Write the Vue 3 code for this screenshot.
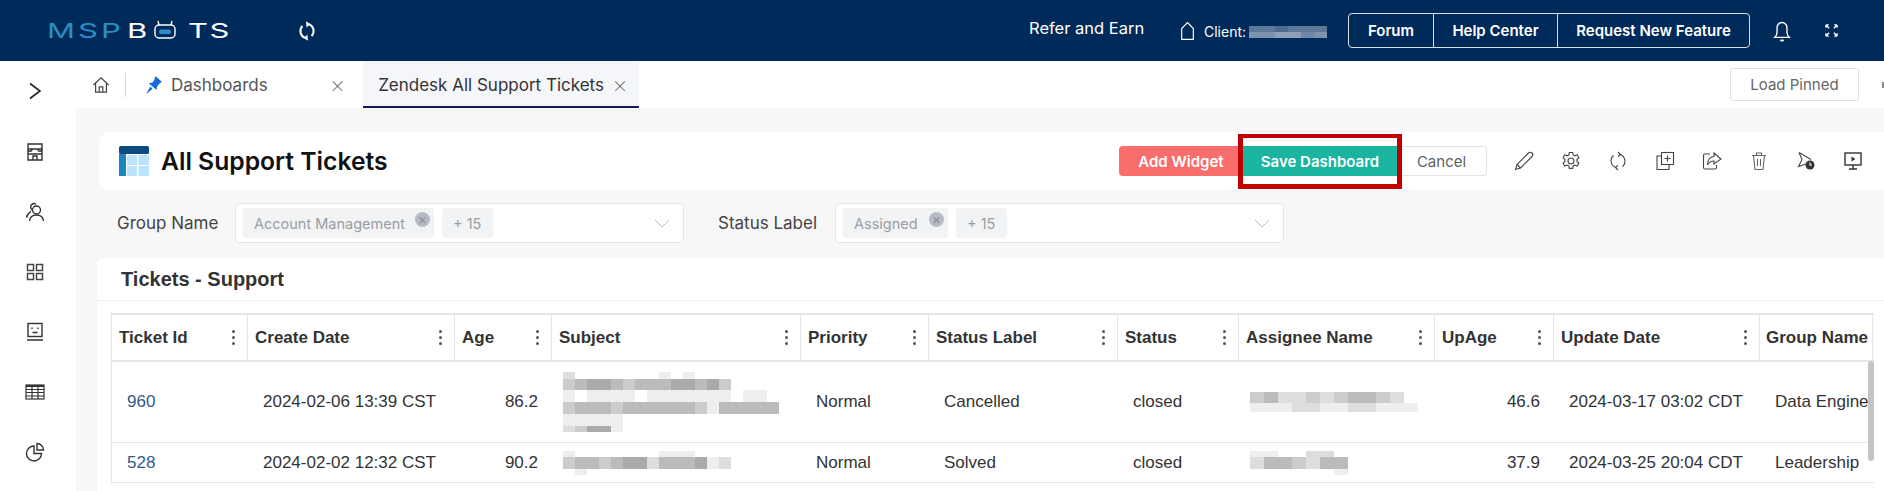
<template>
  <div class="app-page">
    <header class="top-bar">
      <div class="logo">
        <span class="logo-msp">MSP</span>
        <span class="logo-b">B</span>
        <svg class="logo-bot" viewBox="0 0 22 19" fill="none" stroke="#fff" stroke-width="1.4">
          <path d="M5 5L4 1M17 5l1-4" />
          <rect x="1" y="5" width="20" height="13" rx="4" />
          <rect x="5" y="9.500" width="12" height="4.500" rx="2" fill="#2a8fc4" stroke="none" />
        </svg>
        <span class="logo-ts">TS</span>
      </div>
      <svg class="sync-icon" viewBox="0 0 24 24" fill="none" stroke="#fff" stroke-width="2.2">
        <path d="M14 4.500a8 8 0 0 1 3 13" />
        <path d="M10 19.500a8 8 0 0 1-3-13" />
        <path d="M11 2l4 2.500-3.500 3M13 22l-4-2.500 3.500-3" fill="#fff" stroke-width="1" />
      </svg>
      <span class="refer">Refer and Earn</span>
      <svg class="client-home" viewBox="0 0 18 24" fill="none" stroke="#fff" stroke-width="1.4">
        <path d="M2 22V9l7-7 7 7v13z" />
      </svg>
      <span class="client-label">Client:</span>
      <div class="mosaic client-mosaic">
        <div v-for="(row, i) in clientBlur" :key="i" class="mosaic-row">
          <i v-for="(c, j) in row" :key="j" :style="{ width: '13px', height: '6px', background: c }"></i>
        </div>
      </div>
      <div class="link-group">
        <a class="forum">Forum</a>
        <a class="help">Help Center</a>
        <a class="request">Request New Feature</a>
      </div>
      <svg class="bell" viewBox="0 0 20 26" fill="none" stroke="#fff" stroke-width="1.5">
        <path d="M2 20c2-2 2.500-3 2.500-6V9a5.500 5.500 0 0 1 11 0v5c0 3 .5 4 2.500 6z" />
        <path d="M8 23.500h4" stroke-width="2" />
      </svg>
      <svg class="expand" viewBox="0 0 14 14" fill="none" stroke="#fff" stroke-width="1.400">
        <path d="M1 1l3.500 3.500M1 1h3M1 1v3M13 1L9.500 4.500M13 1h-3M13 1v3M1 13l3.500-3.500M1 13h3M1 13v-3M13 13L9.500 9.500M13 13h-3M13 13v-3" />
      </svg>
    </header>

    <div class="body-row">
      <aside class="side-bar">
        <svg class="side-chevron" viewBox="0 0 14 18" fill="none" stroke="#222" stroke-width="1.6">
          <path d="M2 1.500L12 9 2 16.500" />
        </svg>
        <svg class="side-icon" viewBox="0 0 20 20" fill="none" stroke="#333" stroke-width="1.4">
          <path d="M3 2h14v5H3zM2.500 7h15M3 7v11h14V7M3 12h14M8 18v-4h4v4M7 7c0 3-4 3-4 0M13 7c0 3 4 3 4 0" />
        </svg>
        <svg class="side-icon" viewBox="0 0 20 20" fill="none" stroke="#333" stroke-width="1.4">
          <circle cx="11.500" cy="8" r="4" />
          <path d="M4.500 19c.5-4 3-6 7-6s6.500 2 7 6" />
          <path d="M11 2a4 4 0 0 0-5 1.500c-.7 1.600-.2 3 1 4.500M6 9.500C3.500 11 2 13 1.500 15.500" />
        </svg>
        <svg class="side-icon" viewBox="0 0 20 20" fill="none" stroke="#444" stroke-width="1.500">
          <rect x="2.500" y="2.500" width="6" height="6" />
          <rect x="11.500" y="2.500" width="6" height="6" />
          <rect x="2.500" y="11.500" width="6" height="6" />
          <rect x="11.500" y="11.500" width="6" height="6" />
        </svg>
        <svg class="side-icon" viewBox="0 0 20 20" fill="none" stroke="#333" stroke-width="1.400">
          <rect x="3" y="1.500" width="14" height="13" />
          <path d="M7 5.500v1.500M13 5.500v1.500M7.500 10.500h5M2 18h16" />
        </svg>
        <svg class="side-icon" viewBox="0 0 20 20" fill="none" stroke="#333" stroke-width="1.200">
          <rect x="1" y="3" width="18" height="14" />
          <path d="M1 7.500h18M1 10.500h18M1 14h18M7 3v14M13 3v14" />
          <path d="M1 4h18" stroke-width="2" />
        </svg>
        <svg class="side-icon" viewBox="0 0 20 20" fill="none" stroke="#333" stroke-width="1.400">
          <path d="M9 4a7.500 7.500 0 1 0 7.500 7.500H9z" />
          <path d="M12 1.500a6.500 6.500 0 0 1 6.500 6.500H12z" />
        </svg>
      </aside>

      <main class="main-col">
        <nav class="tab-bar">
          <svg class="tab-home" viewBox="0 0 20 20" fill="none" stroke="#444" stroke-width="1.300">
            <path d="M1.500 10L10 2l8.500 8M4 8v10h12V8M8 18v-6h4v6" />
          </svg>
          <span class="tab-divider"></span>
          <div class="tab">
            <svg class="tab-pin" viewBox="0 0 16 18" fill="#1667d9">
              <path d="M9.500 0L16 6l-2 1-3 3.500-.5 3.500L2.800 7.300 6.500 6.500 8.500 3.500z" />
              <path d="M4.500 10.500L0 18l6.500-5z" />
            </svg>
            <span class="tab-text">Dashboards</span>
            <span class="tab-close first-close">×</span>
          </div>
          <div class="tab active">
            <span class="tab-text clip">Zendesk All Support Tickets</span>
            <span class="tab-close">×</span>
          </div>
          <button class="load-pinned">Load Pinned</button>
          <span class="edge-mark"></span>
        </nav>

        <section class="title-card">
          <svg class="title-icon" viewBox="0 0 30 30">
            <rect width="30" height="8" rx="1.500" fill="#0d4a80" />
            <rect y="8" width="7" height="22" fill="#1a85c0" />
            <rect x="8" y="9" width="10" height="10" fill="#bde3fa" />
            <rect x="19.500" y="9" width="10.500" height="10" fill="#bde3fa" />
            <rect x="8" y="20" width="10" height="10" fill="#bde3fa" />
            <rect x="19.500" y="20" width="10.500" height="10" fill="#bde3fa" />
          </svg>
          <h1 class="page-title">All Support Tickets</h1>
          <div class="action-group">
            <button class="btn add">Add Widget</button>
            <div class="save-wrap">
              <button class="btn save">Save Dashboard</button>
              <span class="red-box"></span>
            </div>
            <button class="btn cancel">Cancel</button>
          </div>
          <div class="tool-icons">
            <svg viewBox="0 0 20 20" fill="none" stroke="#444" stroke-width="1.100">
              <path d="M1.500 18.500l1.500-5L14.500 2c1-1 2.500-1 3.500 0s1 2.500 0 3.500L6.500 17z" />
              <path d="M3 13.500L6.500 17" />
            </svg>
            <svg viewBox="0 0 20 20" fill="none" stroke="#444" stroke-width="1.100">
              <path d="M8.300 1.500h3.400l.5 2.500 1.700.8 2.300-1 1.700 3-1.900 1.700v1.900l1.900 1.700-1.700 3-2.300-1-1.700.8-.5 2.500H8.300l-.5-2.500-1.700-.8-2.300 1-1.700-3 1.900-1.700V8.500L2.100 6.800l1.700-3 2.300 1 1.700-.8z" />
              <circle cx="10" cy="10" r="3" />
            </svg>
            <svg viewBox="0 0 20 20" fill="none" stroke="#444" stroke-width="1.100">
              <path d="M12 3.500a7 7 0 0 1 2.500 12M8 16.500a7 7 0 0 1-2.500-12" />
              <path d="M10 1l2.500 2.500L10 5.500M10 19l-2.500-2.500 2.500-2" />
            </svg>
            <svg viewBox="0 0 20 20" fill="none" stroke="#444" stroke-width="1.100">
              <rect x="6.500" y="1.500" width="12" height="12" />
              <path d="M12.500 4.500v6M9.500 7.500h6" />
              <path d="M6.500 5H2v13.500h12V14" />
            </svg>
            <svg viewBox="0 0 20 20" fill="none" stroke="#444" stroke-width="1.100">
              <path d="M8 3H3a1.500 1.500 0 0 0-1.500 1.500v12A1.500 1.500 0 0 0 3 18h10a1.500 1.500 0 0 0 1.500-1.500V14" />
              <path d="M12 2l7 6-7 5V10c-3 0-5 1-6.500 4 0-5 2-8 6.500-8.500z" />
            </svg>
            <svg viewBox="0 0 20 20" fill="none" stroke="#666" stroke-width="1.100">
              <path d="M3 4.500h14M7.500 4.500V2h5v2.500M4.500 4.500L6 18.500h8l1.500-14M8.500 8v7M11.500 8v7" />
            </svg>
            <svg viewBox="0 0 20 20" fill="none" stroke="#444" stroke-width="1.100">
              <path d="M3 1.500l12 7M3 1.500l3 7-3.500 7L10 13" />
              <circle cx="14" cy="14" r="4.500" fill="#333" stroke="none" />
              <path d="M14 11.500V14h2" stroke="#fff" />
            </svg>
            <svg viewBox="0 0 20 20" fill="none" stroke="#333" stroke-width="1.400">
              <rect x="2" y="2" width="16" height="12" />
              <path d="M10 14v4M6 18h8" />
              <path d="M8.500 5.500l4 2.500-4 2.500z" fill="#333" stroke="none" />
            </svg>
          </div>
        </section>

        <section class="filter-row">
          <label class="filter-label first">Group Name</label>
          <div class="select">
            <span class="tag first-tag">Account Management<span class="tag-x">×</span></span>
            <span class="tag more">+ 15</span>
            <svg class="chevron" viewBox="0 0 16 9" fill="none" stroke="#bbb" stroke-width="1">
              <path d="M1 1l7 7 7-7" />
            </svg>
          </div>
          <label class="filter-label second">Status Label</label>
          <div class="select">
            <span class="tag second-tag">Assigned<span class="tag-x">×</span></span>
            <span class="tag more">+ 15</span>
            <svg class="chevron" viewBox="0 0 16 9" fill="none" stroke="#bbb" stroke-width="1">
              <path d="M1 1l7 7 7-7" />
            </svg>
          </div>
        </section>

        <section class="table-card">
          <h2 class="card-title">Tickets - Support</h2>
          <div class="table-wrap">
            <div class="grid-table">
              <div class="t-row t-head">
                <div v-for="col in columns" :key="col" class="th">
                  <span class="th-label">{{ col }}</span>
                  <span v-if="col !== 'Group Name'" class="kebab"><i></i><i></i><i></i></span>
                </div>
              </div>
              <div v-for="row in rows" :key="row.id" class="t-row t-body" :class="row.size">
                <div class="td link">{{ row.id }}</div>
                <div class="td">{{ row.created }}</div>
                <div class="td right">{{ row.age }}</div>
                <div class="td blur-cell">
                  <div class="mosaic">
                    <div v-for="(line, i) in row.subject" :key="i" class="mosaic-row">
                      <i v-for="(c, j) in line.cells" :key="j" :style="{ width: '12px', height: line.h + 'px', background: shade(c) }"></i>
                    </div>
                  </div>
                </div>
                <div class="td">{{ row.priority }}</div>
                <div class="td">{{ row.label }}</div>
                <div class="td">{{ row.status }}</div>
                <div class="td blur-cell">
                  <div class="mosaic">
                    <div v-for="(line, i) in row.assignee" :key="i" class="mosaic-row">
                      <i v-for="(c, j) in line.cells" :key="j" :style="{ width: '14px', height: line.h + 'px', background: shade(c) }"></i>
                    </div>
                  </div>
                </div>
                <div class="td right">{{ row.upAge }}</div>
                <div class="td">{{ row.updated }}</div>
                <div class="td clip-cell">{{ row.group }}</div>
              </div>
            </div>
            <span class="scroll-thumb"></span>
          </div>
        </section>
      </main>
    </div>
  </div>
</template>

<script setup>
const columns = [
  'Ticket Id', 'Create Date', 'Age', 'Subject', 'Priority', 'Status Label',
  'Status', 'Assignee Name', 'UpAge', 'Update Date', 'Group Name'
]

// redacted bits of the screenshot, one hex char = one grey square
const shade = (c) => `#${c}${c}${c}`

const clientBlur = [
  ['#5d7899', '#5d7899', '#4a6a90', '#5d7899', '#5d7899', '#5d7899'],
  ['#7d93ad', '#7d93ad', '#8ea1b8', '#8ea1b8', '#6f88a8', '#7d93ad']
]

const rows = [
  {
    id: 960,
    created: '2024-02-06 13:39 CST',
    age: '86.2',
    size: 'tall',
    subject: [
      { h: 7, cells: 'dfffffffefefffffff' },
      { h: 11, cells: 'cbaabcbbbaabacffff' },
      { h: 12, cells: 'efeeeefeeeeeeefeef' },
      { h: 12, cells: 'cbbbcbbbbbbcebbbbb' },
      { h: 12, cells: 'eeeeefffffffffffff' },
      { h: 6, cells: 'dcaaeffffffffffff' }
    ],
    priority: 'Normal',
    label: 'Cancelled',
    status: 'closed',
    assignee: [
      { h: 11, cells: 'cbddcdcbbcdf' },
      { h: 9, cells: 'eeeddeeddeee' }
    ],
    upAge: '46.6',
    updated: '2024-03-17 03:02 CDT',
    group: 'Data Engineering'
  },
  {
    id: 528,
    created: '2024-02-02 12:32 CST',
    age: '90.2',
    size: 'short',
    subject: [
      { h: 6, cells: 'efffffffeeefffff' },
      { h: 12, cells: 'cbbcbaadbbbaed' },
      { h: 6, cells: 'fefffffffffffff' }
    ],
    priority: 'Normal',
    label: 'Solved',
    status: 'closed',
    assignee: [
      { h: 6, cells: 'eeffdd' },
      { h: 12, cells: 'dbbcdbb' },
      { h: 6, cells: 'ffffffe' }
    ],
    upAge: '37.9',
    updated: '2024-03-25 20:04 CDT',
    group: 'Leadership'
  }
]
</script>

<style>
html, body {
  margin: 0;
  background: #fff;
}
</style>

<style scoped>
.app-page {
  width: 1884px;
  height: 491px;
  overflow: hidden;
  font-family: Inter, "Liberation Sans", sans-serif;
  color: #333;
}

/* top bar */
.top-bar {
  height: 61px;
  background: #002a5a;
  display: flex;
  align-items: center;
  color: #fff;
  padding-left: 47px;
  box-sizing: border-box;
}
.logo {
  display: flex;
  align-items: center;
  width: 186px;
  height: 20px;
  font-weight: 400;
  font-size: 20px;
  white-space: nowrap;
}
.logo span {
  display: block;
  transform-origin: left center;
  transform: scaleX(1.55);
}
.logo-msp {
  color: #2a8fc4;
  letter-spacing: 2px;
  width: 80px;
}
.logo-b {
  color: #fff;
  width: 27px;
}
.logo-bot {
  width: 22px;
  height: 19px;
  margin: -3px 12px 0 0;
}
.logo-ts {
  color: #fff;
  letter-spacing: 1px;
}
.sync-icon {
  width: 22px;
  height: 24px;
  margin-left: 63px;
}
.refer {
  font-size: 16.500px;
  margin-left: 711px;
  margin-top: -6px;
  width: 120px;
  white-space: nowrap;
}
.client-home {
  width: 15px;
  height: 20px;
  margin-left: 31px;
}
.client-label {
  font-size: 14px;
  margin-left: 9px;
  width: 45px;
  margin-top: 2px;
}
.mosaic {
  display: flex;
  flex-direction: column;
}
.mosaic-row {
  display: flex;
}
.mosaic-row i {
  display: block;
  flex: none;
}
.client-mosaic {
  width: 78px;
  margin-top: 2px;
}
.link-group {
  display: flex;
  height: 33px;
  margin-left: 21px;
  border: 1px solid #d8e0ea;
  border-radius: 4px;
  font-size: 15px;
  font-weight: 600;
}
.link-group a {
  display: flex;
  align-items: center;
  justify-content: center;
  border-left: 1px solid #d8e0ea;
}
.link-group .forum {
  width: 84px;
  border-left: none;
}
.link-group .help {
  width: 123px;
}
.link-group .request {
  width: 191px;
}
.bell {
  width: 18px;
  height: 24px;
  margin-left: 23px;
}
.expand {
  width: 13px;
  height: 13px;
  margin-left: 34px;
}

.body-row {
  display: flex;
  height: 430px;
}

/* side bar */
.side-bar {
  width: 76px;
  flex: none;
  background: #fff;
  display: flex;
  flex-direction: column;
  align-items: center;
  padding: 21px 6px 0 0;
  box-sizing: border-box;
}
.side-chevron {
  width: 14px;
  height: 18px;
  margin-bottom: 42px;
  flex: none;
}
.side-icon {
  width: 20px;
  height: 20px;
  margin-bottom: 40px;
  flex: none;
}

.main-col {
  flex: 1;
  min-width: 0;
  background: #f7f7f7;
}

/* tabs */
.tab-bar {
  height: 47px;
  background: #fff;
  display: flex;
  align-items: center;
}
.tab-home {
  width: 18px;
  height: 18px;
  margin-left: 16px;
}
.tab-divider {
  width: 1px;
  height: 24px;
  background: #d6d6d6;
  margin-left: 15px;
}
.tab {
  display: flex;
  align-items: center;
  height: 47px;
  box-sizing: border-box;
}
.tab-pin {
  width: 16px;
  height: 18px;
  margin-left: 20px;
  margin-right: 9px;
}
.tab-text {
  font-size: 17px;
  color: #555;
}
.first-close {
  margin-left: 62px;
  margin-right: 18px;
}
.tab-close {
  font-size: 24px;
  font-weight: 200;
  line-height: 1;
  color: #777;
}
.tab.active {
  background: #f5f6fa;
  border-bottom: 2px solid #17185a;
  width: 276px;
  padding: 2px 0 0 15px;
}
.tab.active .tab-text {
  color: #333;
}
.clip {
  width: 228px;
  overflow: hidden;
  white-space: nowrap;
}
.tab.active .tab-close {
  margin-left: 6px;
}
.load-pinned {
  margin-left: auto;
  width: 129px;
  height: 33px;
  background: #fff;
  border: 1px solid #e2e2e2;
  border-radius: 3px;
  color: #666;
  font-family: inherit;
  font-size: 15px;
}
.edge-mark {
  width: 2px;
  height: 6px;
  background: #888;
  margin-left: 23px;
}

/* title card */
.title-card {
  margin: 24px 0 0 23px;
  height: 58px;
  background: #fff;
  border-radius: 10px 0 0 10px;
  display: flex;
  align-items: center;
  padding-left: 20px;
  box-sizing: border-box;
}
.title-icon {
  width: 30px;
  height: 30px;
  flex: none;
}
.page-title {
  margin: 0 0 0 12px;
  font-size: 24.700px;
  font-weight: 600;
  color: #111;
}
.action-group {
  display: flex;
  margin-left: auto;
  height: 30px;
}
.btn {
  height: 30px;
  border: none;
  font-family: inherit;
  font-size: 15px;
  padding: 0;
}
.btn.add {
  width: 124px;
  background: #f96d6d;
  border-radius: 4px 0 0 4px;
  color: #fff;
  font-weight: 600;
}
.save-wrap {
  position: relative;
}
.btn.save {
  display: block;
  width: 154px;
  background: #1ab5a0;
  color: #fff;
  font-weight: 600;
}
.red-box {
  position: absolute;
  top: -12px;
  bottom: -13px;
  left: -5px;
  right: -5px;
  border: 5px solid #c00000;
  border-top-width: 4px;
}
.btn.cancel {
  width: 90px;
  background: #fff;
  border: 1px solid #e4e4e4;
  border-left: none;
  border-radius: 0 4px 4px 0;
  color: #606266;
}
.tool-icons {
  display: flex;
  gap: 27px;
  margin: 0 21px 0 27px;
}
.tool-icons svg {
  width: 20px;
  height: 20px;
  flex: none;
}

/* filters */
.filter-row {
  display: flex;
  align-items: center;
  height: 68px;
  padding-bottom: 2px;
  box-sizing: border-box;
}
.filter-label {
  font-size: 17px;
  color: #444;
}
.filter-label.first {
  margin-left: 41px;
  width: 118px;
}
.filter-label.second {
  margin-left: 34px;
  width: 117px;
}
.select {
  position: relative;
  height: 40px;
  width: 449px;
  background: #fff;
  border: 1px solid #e4e4e4;
  border-radius: 4px;
  box-sizing: border-box;
  display: flex;
  align-items: center;
  padding-left: 7px;
  gap: 8px;
}
.tag {
  position: relative;
  height: 30px;
  display: flex;
  align-items: center;
  background: #f2f3f5;
  border-radius: 4px;
  color: #9a9da3;
  font-size: 14.500px;
  padding-left: 11px;
  box-sizing: border-box;
}
.first-tag {
  width: 191px;
}
.second-tag {
  width: 105px;
}
.tag.more {
  width: 51px;
}
.tag-x {
  position: absolute;
  right: 4px;
  top: 4px;
  width: 15px;
  height: 15px;
  border-radius: 50%;
  background: #b8bbc4;
  color: #8a8d95;
  font-size: 14px;
  line-height: 14px;
  text-align: center;
}
.chevron {
  position: absolute;
  right: 13px;
  top: 15px;
  width: 16px;
  height: 9px;
}

/* table */
.table-card {
  background: #fff;
  margin-left: 21px;
  height: 300px;
  border-radius: 6px 0 0 0;
}
.card-title {
  margin: 0;
  height: 42px;
  line-height: 42px;
  padding-left: 24px;
  font-family: "Liberation Sans", Arial, sans-serif;
  font-size: 20px;
  font-weight: 700;
  color: #333;
  border-bottom: 1px solid #eee;
}
.table-wrap {
  position: relative;
  margin: 12px 0 0 14px;
}
.grid-table {
  width: 1763px;
  border-top: 2px solid #e6e6e6;
  border-left: 1px solid #e6e6e6;
  box-sizing: border-box;
  font-family: "Liberation Sans", Arial, sans-serif;
  font-size: 17px;
  color: #333;
}
.t-row {
  display: grid;
  grid-template-columns: 136px 207px 97px 249px 128px 189px 121px 196px 119px 206px 113px;
}
.t-head {
  height: 45px;
  border-bottom: 2px solid #e6e6e6;
}
.th {
  display: flex;
  align-items: center;
  justify-content: space-between;
  padding: 0 12px 0 7px;
  border-right: 1px solid #e6e6e6;
  font-weight: 700;
  white-space: nowrap;
  min-width: 0;
}
.th:last-child {
  padding-right: 0;
  padding-left: 6px;
}
.kebab {
  display: flex;
  flex-direction: column;
  gap: 2.500px;
}
.kebab i {
  display: block;
  width: 3.500px;
  height: 3.500px;
  border-radius: 50%;
  background: #555;
}
.t-body {
  border-bottom: 1px solid #e6e6e6;
  box-sizing: border-box;
}
.t-body.tall {
  height: 81px;
}
.t-body.short {
  height: 40px;
}
.td {
  display: flex;
  align-items: center;
  padding: 0 14px 0 15px;
  white-space: nowrap;
  min-width: 0;
}
.td.link {
  color: #33598a;
}
.td.right {
  justify-content: flex-end;
}
.td.blur-cell {
  padding: 0 0 0 11px;
}
.td.clip-cell {
  overflow: hidden;
  padding-right: 5px;
}
.scroll-thumb {
  position: absolute;
  left: 1757px;
  top: 48px;
  width: 6px;
  height: 100px;
  border-radius: 3px;
  background: #c4c4c4;
}
</style>
